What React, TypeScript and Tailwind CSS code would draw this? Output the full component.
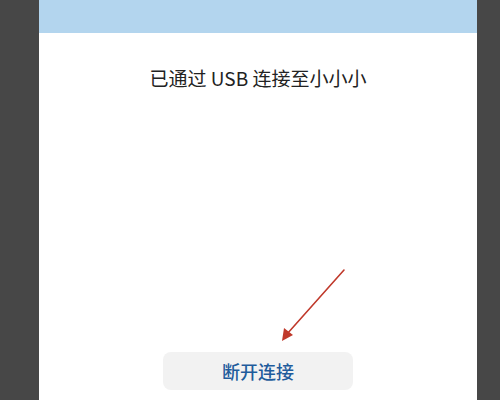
import React from "react";

export default function App() {
  return (
    <div
      className="w-[500px] h-[400px] bg-[#474747] flex overflow-hidden"
      style={{ fontFamily: '"Noto Sans CJK SC", "Noto Sans", sans-serif' }}
    >
      <div className="w-[39px] shrink-0" />
      <div className="w-[438px] shrink-0 bg-white flex flex-col relative">
        <div className="h-[33px] bg-[#b3d5ee]" />
        <div className="mt-[31px] text-center text-[19px] leading-[28px] text-[#222222]">
          已通过 USB 连接至小小小
        </div>
        <div className="flex-1" />
        <div className="flex justify-center pb-[10px]">
          <div className="w-[190px] h-[38px] rounded-[8px] bg-[#f2f2f2] flex items-center justify-center text-[18px] font-medium text-[#1f5c9c]">
            断开连接
          </div>
        </div>
        <svg
          className="absolute left-0 top-0 pointer-events-none"
          width="438"
          height="400"
          viewBox="0 0 438 400"
        >
          <line x1="305" y1="270" x2="248" y2="334" stroke="#c0392b" strokeWidth="1.6" strokeLinecap="round" />
          <polygon points="243,341 245,328 254,335" fill="#c0392b" />
        </svg>
      </div>
      <div className="flex-1" />
    </div>
  );
}
